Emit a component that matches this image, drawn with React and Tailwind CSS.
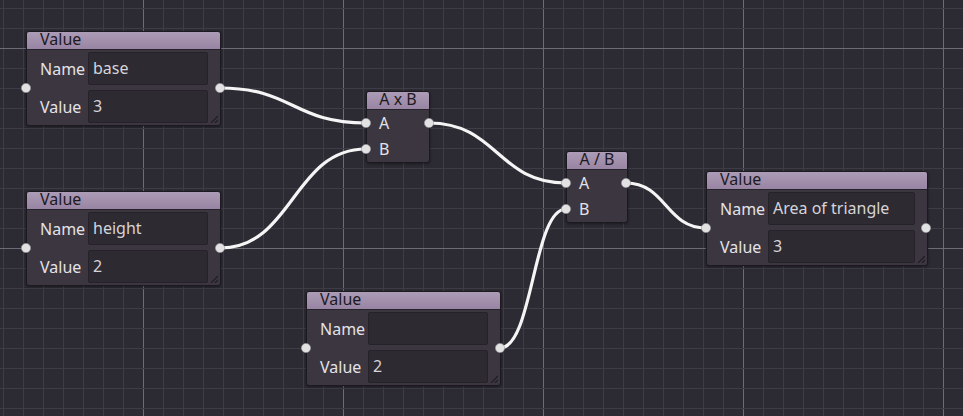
import React from "react";

const FONT = { fontFamily: '"Noto Sans", "Open Sans", sans-serif' };

const W = 963;
const H = 416;

// wire endpoints: [fromX, fromY, toX, toY]
const wires = [
  [220, 88, 366, 123],
  [220, 248, 366, 149],
  [429, 123, 566, 183],
  [500, 348, 566, 209],
  [626, 183, 706, 228],
];

const ports = [
  [26, 88], [220, 88],
  [26, 248], [220, 248],
  [366, 123], [366, 149], [429, 123],
  [566, 183], [566, 209], [626, 183],
  [706, 228], [926, 228],
  [306, 348], [500, 348],
];

const wirePath = ([x1, y1, x2, y2]) => {
  const c = Math.abs(x2 - x1) * 0.5;
  return `M${x1} ${y1} C${x1 + c} ${y1} ${x2 - c} ${y2} ${x2} ${y2}`;
};

const Grid = () => {
  const xs = [];
  for (let x = 3; x < W; x += 20) xs.push(x);
  const ys = [];
  for (let y = 8; y < H; y += 20) ys.push(y);
  return (
    <svg className="absolute inset-0" width={W} height={H}>
      {xs.map((x) => (
        <line
          key={"x" + x}
          x1={x + 0.5}
          x2={x + 0.5}
          y1={0}
          y2={H}
          stroke={(x - 143) % 200 === 0 ? "#6d6c75" : "#3e3d46"}
          strokeWidth="1"
        />
      ))}
      {ys.map((y) => (
        <line
          key={"y" + y}
          y1={y + 0.5}
          y2={y + 0.5}
          x1={0}
          x2={W}
          stroke={(y - 48) % 200 === 0 ? "#6d6c75" : "#3e3d46"}
          strokeWidth="1"
        />
      ))}
    </svg>
  );
};

const Grip = () => (
  <svg className="absolute right-[2px] bottom-[2px]" width="8" height="8">
    <line x1="1" y1="8" x2="8" y2="1" stroke="#1f1d23" strokeWidth="1.2" />
    <line x1="5" y1="8" x2="8" y2="5" stroke="#1f1d23" strokeWidth="1.2" />
  </svg>
);

const Title = ({ children, center }) => (
  <div
    className={
      "h-[18px] rounded-t-[2px] border-b border-[#27232b] bg-gradient-to-b from-[#ac9cb6] to-[#9884a3] text-[16px] leading-[15px] text-[#1d1a21] whitespace-nowrap " +
      (center ? "text-center" : "pl-[13px]")
    }
  >
    {children}
  </div>
);

const ValueNode = ({ x, y, w, name, value }) => (
  <div
    className="absolute rounded-[3px] border border-[#1c1a20] bg-[#3b3640] shadow-[0_1px_3px_rgba(0,0,0,0.4)]"
    style={{ left: x, top: y, width: w }}
  >
    <Title>Value</Title>
    <div className="flex flex-col gap-[5px] pt-[2px] pb-[2px] pl-[13px] pr-[12px] text-[16px] text-[#e4e2e6]">
      {[
        ["Name", name],
        ["Value", value],
      ].map(([label, v]) => (
        <div key={label} className="flex items-center">
          <div className="w-[48px] shrink-0">{label}</div>
          <div className="flex-1 h-[33px] rounded-[2px] border border-[#25222a] bg-[#2d2a32] pl-[4px] leading-[31px] text-[#d6d4d8] whitespace-nowrap">
            {v}
          </div>
        </div>
      ))}
    </div>
    <Grip />
  </div>
);

const OpNode = ({ x, y, w, title }) => (
  <div
    className="absolute rounded-[3px] border border-[#1c1a20] bg-[#3b3640] shadow-[0_1px_3px_rgba(0,0,0,0.4)]"
    style={{ left: x, top: y, width: w }}
  >
    <Title center>{title}</Title>
    <div className="flex flex-col pl-[12px] text-[16px] text-[#e4e2e6]">
      <div className="h-[26px] leading-[26px]">A</div>
      <div className="h-[26px] leading-[26px]">B</div>
    </div>
  </div>
);

export default function App() {
  return (
    <div
      className="relative w-[963px] h-[416px] overflow-hidden bg-[#2c2b33]"
      style={FONT}
    >
      <Grid />
      <svg className="absolute inset-0" width={W} height={H}>
        {wires.map((w, i) => (
          <path
            key={i}
            d={wirePath(w)}
            fill="none"
            stroke="#f5f5f5"
            strokeWidth="3.2"
            strokeLinecap="round"
          />
        ))}
      </svg>

      <ValueNode x={26} y={31} w={195} name="base" value="3" />
      <ValueNode x={26} y={191} w={195} name="height" value="2" />
      <OpNode x={366} y={91} w={64} title="A x B" />
      <OpNode x={566} y={151} w={62} title="A / B" />
      <ValueNode x={306} y={291} w={195} name="" value="2" />
      <ValueNode x={706} y={171} w={222} name="Area of triangle" value="3" />

      <svg className="absolute inset-0 pointer-events-none" width={W} height={H}>
        {ports.map(([px, py], i) => (
          <circle
            key={i}
            cx={px}
            cy={py}
            r="4.6"
            fill="#e2e2e2"
            stroke="#9a98a0"
            strokeWidth="0.6"
          />
        ))}
      </svg>
    </div>
  );
}
